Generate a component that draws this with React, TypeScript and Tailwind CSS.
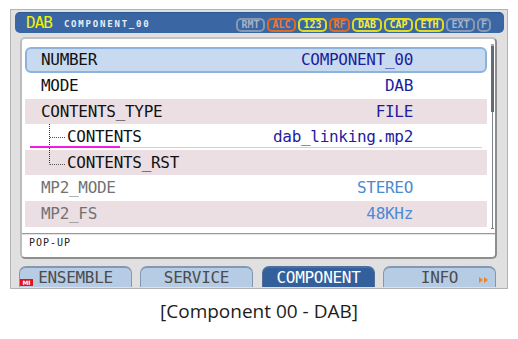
import React from "react";

const LCD = "font-['DejaVu_Sans_Mono',monospace]";

type Row = {
  label: string;
  value: string;
  h: string;
  sel?: boolean;
  pink?: boolean;
  dim?: boolean;
  tree?: "mid" | "end";
  underline?: boolean;
};

const rows: Row[] = [
  { label: "NUMBER", value: "COMPONENT_00", h: "h-[26px]", sel: true },
  { label: "MODE", value: "DAB", h: "h-[26px]" },
  { label: "CONTENTS_TYPE", value: "FILE", h: "h-[25px]", pink: true },
  { label: "CONTENTS", value: "dab_linking.mp2", h: "h-[26px]", tree: "mid", underline: true },
  { label: "CONTENTS_RST", value: "", h: "h-[25px]", pink: true, tree: "end" },
  { label: "MP2_MODE", value: "STEREO", h: "h-[26px]", dim: true },
  { label: "MP2_FS", value: "48KHz", h: "h-[26px]", dim: true, pink: true },
];

type Badge = { t: string; w: string; c: "g" | "o" | "y" };
const badges: Badge[] = [
  { t: "RMT", w: "w-[29px]", c: "g" },
  { t: "ALC", w: "w-[29px]", c: "o" },
  { t: "123", w: "w-[29px]", c: "y" },
  { t: "RF", w: "w-[21px]", c: "o" },
  { t: "DAB", w: "w-[30px]", c: "y" },
  { t: "CAP", w: "w-[29px]", c: "y" },
  { t: "ETH", w: "w-[29px]", c: "y" },
  { t: "EXT", w: "w-[29px]", c: "g" },
  { t: "F", w: "w-[14px]", c: "g" },
];

const badgeColor = {
  g: "border-[#8898b2] text-[#a8b4c8]",
  o: "border-[#e06a22] text-[#f47a2e]",
  y: "border-[#e2dc1e] text-[#f4ee34]",
};

function Tree({ kind }: { kind: "mid" | "end" }) {
  const h = kind === "mid" ? 26 : 25;
  const y = kind === "mid" ? 13.5 : 14.5;
  const vEnd = kind === "mid" ? h : 14.5;
  return (
    <svg width="18" height={h} className="shrink-0" viewBox={`0 0 18 ${h}`}>
      <line x1="0.5" y1="0" x2="0.5" y2={vEnd} stroke="#333" strokeWidth="1" strokeDasharray="1 1" />
      <line x1="1" y1={y} x2="16" y2={y} stroke="#555" strokeWidth="1" strokeDasharray="1 1" />
    </svg>
  );
}

function ListRow({ r }: { r: Row }) {
  const bg = r.sel
    ? "bg-[#c7daf0] border-2 border-[#8db2dc] rounded-[6px]"
    : r.pink
    ? "bg-[#ecdfe4]"
    : "";
  const labelColor = r.dim ? "text-[#727272]" : "text-[#111111]";
  const valueColor = r.dim ? "text-[#4b8ad2]" : "text-[#1d1d9e]";
  return (
    <div className={`relative flex items-center ${r.h} ${bg}`}>
      {r.tree ? (
        <div className="flex items-center pl-[24px]">
          <Tree kind={r.tree} />
        </div>
      ) : (
        <div className={r.sel ? "w-[14px]" : "w-[16px]"} />
      )}
      <span className={`${LCD} text-[16px] leading-none tracking-[-0.3px] ${labelColor}`}>{r.label}</span>
      <div className="flex-1" />
      <span className={`${LCD} text-[16px] leading-none tracking-[-0.3px] ${valueColor} ${r.sel ? "pr-[72px]" : "pr-[74px]"}`}>
        {r.value}
      </span>
      {r.underline && (
        <div className="absolute left-[5px] right-[5px] top-[22px] flex items-start">
          <div className="w-[90px] h-[2px] bg-[#ee1ce6]" />
          <div className="flex-1 h-[1px] mt-[1px] bg-[#dccbd2]" />
        </div>
      )}
    </div>
  );
}

function Tab({ label, active, mi, arrow }: { label: string; active?: boolean; mi?: boolean; arrow?: boolean }) {
  return (
    <div
      className={`relative w-[113px] h-[21px] rounded-t-[7px] border-t-2 border-x flex items-center justify-center ${
        active ? "bg-[#33609c] border-[#4f6f99]" : "bg-[#b6cbe4] border-[#8397b1]"
      }`}
    >
      <span className={`${LCD} text-[16px] leading-none tracking-[-0.3px] ${active ? "text-white" : "text-[#4c4c4c]"}`}>
        {label}
      </span>
      {mi && (
        <div className="absolute left-[0px] bottom-[1px] w-[13px] h-[7px] bg-[#e41414] flex items-center justify-center">
          <span className="font-['DejaVu_Sans',sans-serif] text-[6px] font-bold leading-none text-white">MI</span>
        </div>
      )}
      {arrow && (
        <svg className="absolute right-[6px] top-[9px]" width="10" height="6" viewBox="0 0 10 6">
          <polygon points="0,0 4,3 0,6" fill="#f08322" />
          <polygon points="5,0 9,3 5,6" fill="#f08322" />
        </svg>
      )}
    </div>
  );
}

export default function App() {
  return (
    <div className="w-[518px] h-[339px] bg-white overflow-hidden">
      <div className="pt-[9px] pl-[10px]">
        <div className="w-[498px] h-[280px] border border-[#b3b3b3] bg-[#e0e0e0] flex flex-col">
          {/* header */}
          <div className="pt-[2px] pl-[4px]">
            <div className="w-[489px] h-[21px] rounded-[5px] bg-[#3a67a4] border-t border-[#2c5690] flex items-center pl-[11px] pr-[13px]">
              <span className={`${LCD} text-[16px] leading-none tracking-[-1px] text-[#f2f200]`}>DAB</span>
              <span className={`${LCD} ml-[12px] mt-[2px] text-[9px] font-bold leading-none tracking-[1.8px] text-[#e6edf7]`}>
                COMPONENT_00
              </span>
              <div className="flex-1" />
              <div className="flex gap-[2px] self-end mb-[1px]">
                {badges.map((b) => (
                  <div
                    key={b.t}
                    className={`${b.w} h-[14px] rounded-[5px] border-2 flex items-center justify-center ${badgeColor[b.c]}`}
                  >
                    <span className={`${LCD} text-[10px] font-bold leading-none`}>{b.t}</span>
                  </div>
                ))}
              </div>
            </div>
          </div>
          {/* panel */}
          <div className="pl-[9px] mt-[4px]">
            <div className="w-[477px] h-[222px] rounded-[5px] bg-white border-2 border-t-[#c4c4c4] border-l-[#bcbcbc] border-r-[#8e8e8e] border-b-[#8e8e8e] flex flex-col">
              <div className="flex pt-[5px] pl-[3px]">
                <div className="w-[462px] mt-[3px] flex flex-col">
                  {rows.map((r) => (
                    <ListRow key={r.label} r={r} />
                  ))}
                </div>
                <div className="ml-[4px] w-[3px] h-[185px] flex flex-col items-center">
                  <div className="w-[3px] h-[2px] bg-[#a9adb3]" />
                  <div className="w-[3px] h-[66px] bg-[#626a74]" />
                  <div className="w-[1px] flex-1 bg-[#7c838c]" />
                  <div className="w-[3px] h-[1px] bg-[#7c838c]" />
                </div>
              </div>
              <div className="mt-[4px] h-[1px] bg-[#9a9a9a]" />
              <div className="h-[1px] bg-[#e4e4e4]" />
              <div className={`${LCD} mt-[3px] pl-[7px] text-[10px] leading-[10px] tracking-[1px] text-[#222]`}>POP-UP</div>
            </div>
          </div>
          {/* tabs */}
          <div className="flex items-end pl-[8px] mt-[7px] gap-[8px]">
            <Tab label="ENSEMBLE" mi />
            <div className="flex gap-[9px]">
              <Tab label="SERVICE" />
              <Tab label="COMPONENT" active />
            </div>
            <Tab label="INFO" arrow />
          </div>
        </div>
      </div>
      <div className="mt-[9px] text-center font-['Open_Sans',sans-serif] text-[19px] leading-[26px] text-[#1c1c1c]">
        [Component 00 - DAB]
      </div>
    </div>
  );
}
